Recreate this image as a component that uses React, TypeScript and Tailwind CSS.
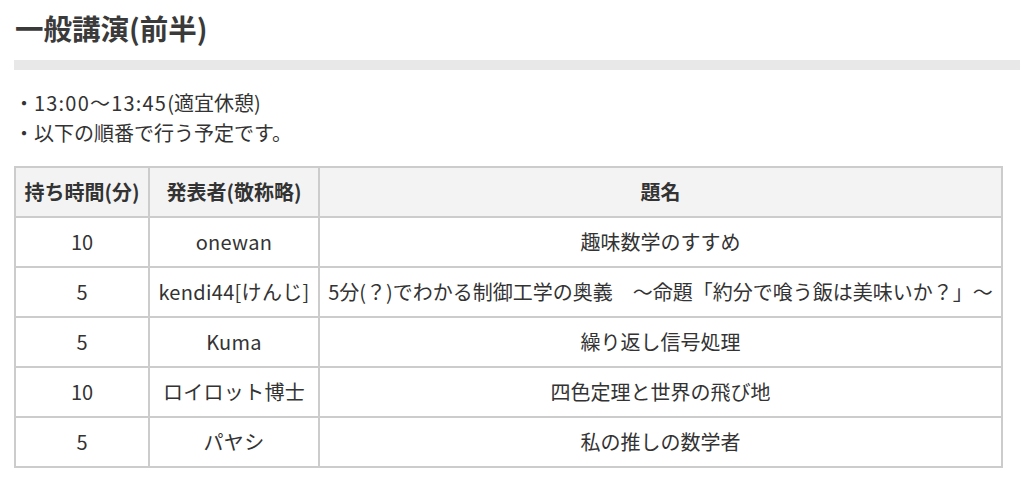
type Talk = {
  minutes: number;
  speaker: string;
  title: string;
};

const talks: Talk[] = [
  { minutes: 10, speaker: "onewan", title: "趣味数学のすすめ" },
  {
    minutes: 5,
    speaker: "kendi44[けんじ]",
    title: "5分(？)でわかる制御工学の奥義　〜命題「約分で喰う飯は美味いか？」〜",
  },
  { minutes: 5, speaker: "Kuma", title: "繰り返し信号処理" },
  { minutes: 10, speaker: "ロイロット博士", title: "四色定理と世界の飛び地" },
  { minutes: 5, speaker: "パヤシ", title: "私の推しの数学者" },
];

export default function App() {
  return (
    <div className="min-h-[488px] bg-white pt-[8px] pl-[14px] text-[#333] font-['Noto_Sans_CJK_JP',sans-serif]">
      {/* Heading */}
      <h2 className="pl-[1px] text-[28.5px] leading-[40px] font-bold text-[#3a3a3a]">一般講演(前半)</h2>
      <div className="mt-[12px] h-[10px] bg-[#e8e8e8]" />

      {/* Notes */}
      <div className="mt-[18px] text-[20px] leading-[30px]">
        <p>
          ・<span className="tracking-[1.2px]">13:00〜13:45</span>(適宜休憩)
        </p>
        <p>・以下の順番で行う予定です。</p>
      </div>

      {/* Table */}
      <div className="mt-[18px] grid w-[989px] grid-cols-[132px_168px_1fr] gap-[2px] bg-[#cccccc] p-[2px] text-[20px]">
        <div className="flex h-[48px] items-center justify-center bg-[#f3f3f3] font-bold">持ち時間(分)</div>
        <div className="flex h-[48px] items-center justify-center bg-[#f3f3f3] font-bold">発表者(敬称略)</div>
        <div className="flex h-[48px] items-center justify-center bg-[#f3f3f3] font-bold">題名</div>
        {talks.map((t) => (
          <>
            <div key={t.speaker + "-m"} className="flex h-[48px] items-center justify-center bg-white">
              {t.minutes}
            </div>
            <div key={t.speaker + "-s"} className="flex h-[48px] items-center justify-center bg-white whitespace-nowrap tracking-[0.3px]">
              {t.speaker}
            </div>
            <div key={t.speaker + "-t"} className="flex h-[48px] items-center justify-center bg-white whitespace-nowrap">
              {t.title}
            </div>
          </>
        ))}
      </div>
    </div>
  );
}
